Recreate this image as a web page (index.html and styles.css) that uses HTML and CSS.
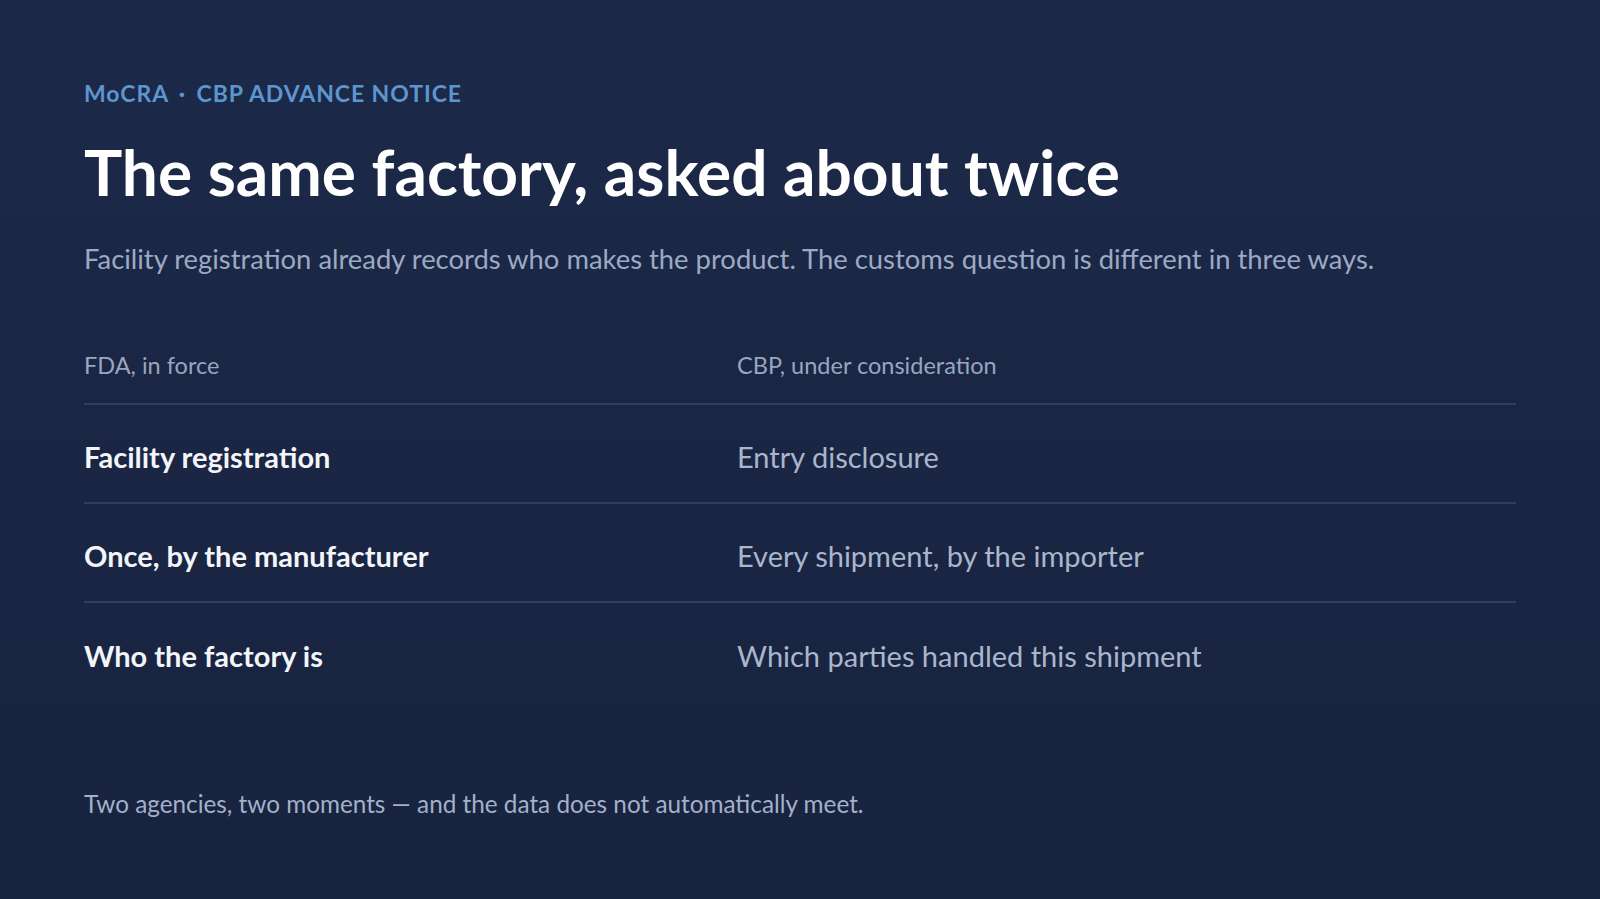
FILE: index.html
```html
<!DOCTYPE html>
<html lang="en">
<head>
    <meta charset="UTF-8">
    <meta name="viewport" content="width=device-width, initial-scale=1.0">
    <title>MoCRA · CBP advance notice</title>
    <link rel="stylesheet" href="styles.css">
</head>
<body>
    <main class="slide">
        <p class="eyebrow">MoCRA <span class="dot">·</span> CBP ADVANCE NOTICE</p>
        <h1>The same factory, asked about twice</h1>
        <p class="lede">Facility registration already records who makes the product. The customs question is different in three ways.</p>

        <section class="compare">
            <div class="compare-head">
                <span>FDA, in force</span>
                <span>CBP, under consideration</span>
            </div>
            <div class="compare-row">
                <strong>Facility registration</strong>
                <span>Entry disclosure</span>
            </div>
            <div class="compare-row">
                <strong>Once, by the manufacturer</strong>
                <span>Every shipment, by the importer</span>
            </div>
            <div class="compare-row">
                <strong>Who the factory is</strong>
                <span>Which parties handled this shipment</span>
            </div>
        </section>

        <p class="note">Two agencies, two moments — and the data does not automatically meet.</p>
    </main>
</body>
</html>
```

FILE: styles.css
```css
* {
    box-sizing: border-box;
    font-family: Lato, 'Liberation Sans', sans-serif;
}
html, body {
    margin: 0;
    height: 100%;
}
body {
    background: linear-gradient(180deg, #1c2948 0%, #1a2644 45%, #18233f 100%);
    color: #ffffff;
}
.slide {
    padding: 79px 84px 0 84px;
}
.eyebrow {
    margin: 0;
    font-size: 23px;
    font-weight: 700;
    letter-spacing: 0.04em;
    color: #5c96cf;
}
.eyebrow .dot {
    padding: 0 4px;
}
h1 {
    margin: 27px 0 0 0;
    font-size: 64px;
    font-weight: 700;
    line-height: 1.2;
    color: #ffffff;
}
.lede {
    margin: 30px 0 0 0;
    font-size: 27.4px;
    line-height: 1.3;
    color: #9caac4;
}
.compare {
    margin-top: 74px;
}
.compare-head,
.compare-row {
    display: grid;
    grid-template-columns: 653px 1fr;
}
.compare-head {
    padding-bottom: 22px;
    border-bottom: 2px solid #2d3f65;
    font-size: 23.5px;
    line-height: 1.3;
    color: #98a6bf;
}
.compare-row {
    height: 99px;
    padding-top: 7px;
    align-items: center;
    font-size: 29px;
    line-height: 1.3;
    border-bottom: 2px solid #2d3f65;
}
.compare-row:last-child {
    border-bottom: none;
}
.compare-row strong {
    font-weight: 700;
    color: #f3f5f9;
}
.compare-row span {
    color: #a9b6cb;
}
.note {
    margin: 86px 0 0 0;
    font-size: 24.3px;
    line-height: 1.3;
    color: #a3b1c8;
}
```
